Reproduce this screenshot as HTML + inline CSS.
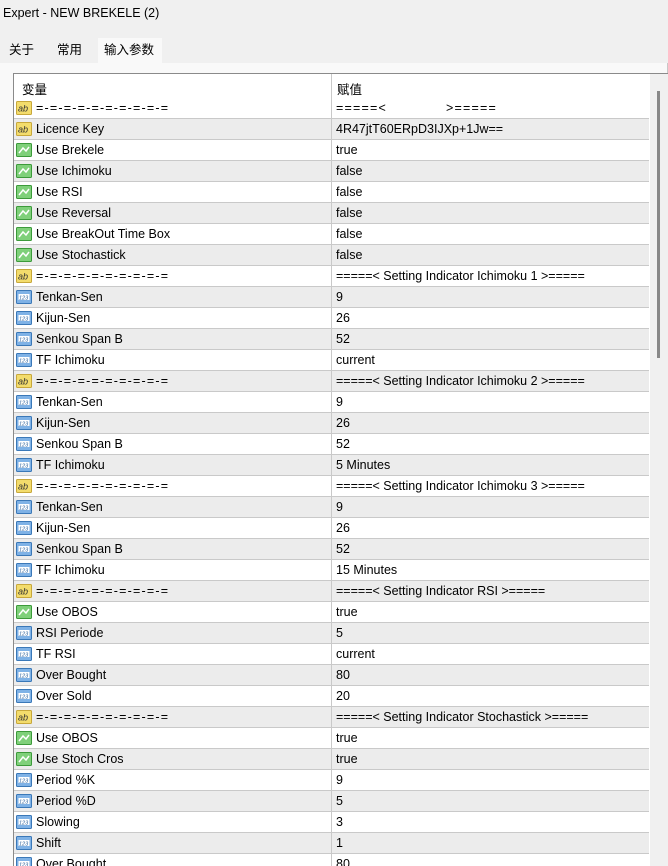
<!DOCTYPE html>
<html><head><meta charset="utf-8"><style>
*{margin:0;padding:0;box-sizing:border-box}
body{width:668px;height:866px;overflow:hidden;background:#f0f0f0;font-family:"Liberation Sans","Noto Sans CJK SC",sans-serif;font-size:12.5px;color:#000;position:relative}
.title{position:absolute;left:3px;top:6px;font-size:12.5px}
.tabs{position:absolute;top:38px;left:0;height:25px}
.tab{position:absolute;top:0;height:25px;line-height:25px;font-size:12.5px;white-space:nowrap}
.panel{position:absolute;left:0;top:63px;width:668px;height:803px;background:#f9f9f9;border-right:1px solid #c8c8c8}
.grid{position:absolute;left:13px;top:73px;width:655px;height:793px;border-left:1px solid #8a8a8a;border-top:1px solid #8a8a8a;background:#fff;overflow:hidden}
.hdr{position:absolute;left:0;top:0;width:636px;height:24px;background:#fff}
.hdr span{position:absolute;top:5px}
.row{position:absolute;left:0;width:635px;height:21px;border-bottom:1px solid #c9c9c9}
.row.g{background:#ececec}
.row .n{position:absolute;left:22px;top:3px;white-space:pre}
.row .v{position:absolute;left:322px;top:3px;white-space:pre}
.s{letter-spacing:1.2px}
.row i{position:absolute;left:2px;top:2px;width:16px;height:16px;display:block}
.vl{position:absolute;left:317px;top:0;width:1px;height:800px;background:#c9c9c9}
.sb{position:absolute;left:636px;top:0;width:19px;height:800px;background:#f0f0f0}
.th{position:absolute;left:7px;top:17px;width:3px;height:267px;background:#888}
</style></head><body>
<div class="title">Expert - NEW BREKELE (2)</div>
<div class="tabs">
<div class="tab" style="left:9px">关于</div>
<div class="tab" style="left:57px">常用</div>
<div class="tab" style="left:98px;width:64px;background:#f9f9f9;padding-left:6px">输入参数</div>
</div>
<div class="panel"></div>
<div class="grid">
<div class="hdr"><span style="left:8px">变量</span><span style="left:323px">赋值</span></div>
<svg width="0" height="0" style="position:absolute"><defs>
<symbol id="ab" viewBox="0 0 16 16"><rect x="0.5" y="1.5" width="15" height="13" rx="1" fill="#f3dc6c" stroke="#c8a83a"/><text x="2" y="11.5" font-size="9" font-family="Liberation Sans" fill="#333">ab</text></symbol>
<symbol id="bo" viewBox="0 0 16 16"><rect x="0.5" y="1.5" width="15" height="13" rx="1" fill="#7fd07a" stroke="#3c9a3a"/><path d="M3 11 L7 6 L10 9 L13 5" stroke="#fff" stroke-width="1.5" fill="none"/></symbol>
<symbol id="nu" viewBox="0 0 16 16"><rect x="0.5" y="1.5" width="15" height="13" rx="1" fill="#7fb2e6" stroke="#3a78b8"/><rect x="2.5" y="5" width="11" height="6" fill="#fff"/><text x="3" y="10.3" font-size="5.5" font-family="Liberation Sans" fill="#2a5f9a">123</text></symbol>
</defs></svg>
<div id="rows"></div>
<div class="vl"></div>
<div class="sb"><div class="th"></div></div>
</div>
<script>
var S='<span class="s">=-=-=-=-=-=-=-=-=-=</span>';
var d=[
["ab",S,'<span class="s">=====&lt;</span>                 <span class="s">&gt;=====</span>'],
["ab","Licence Key","4R47jtT60ERpD3IJXp+1Jw=="],
["bo","Use Brekele","true"],["bo","Use Ichimoku","false"],["bo","Use RSI","false"],["bo","Use Reversal","false"],["bo","Use BreakOut Time Box","false"],["bo","Use Stochastick","false"],
["ab",S,"=====&lt; Setting Indicator Ichimoku 1 &gt;====="],
["nu","Tenkan-Sen","9"],["nu","Kijun-Sen","26"],["nu","Senkou Span B","52"],["nu","TF Ichimoku","current"],
["ab",S,"=====&lt; Setting Indicator Ichimoku 2 &gt;====="],
["nu","Tenkan-Sen","9"],["nu","Kijun-Sen","26"],["nu","Senkou Span B","52"],["nu","TF Ichimoku","5 Minutes"],
["ab",S,"=====&lt; Setting Indicator Ichimoku 3 &gt;====="],
["nu","Tenkan-Sen","9"],["nu","Kijun-Sen","26"],["nu","Senkou Span B","52"],["nu","TF Ichimoku","15 Minutes"],
["ab",S,"=====&lt; Setting Indicator RSI &gt;====="],
["bo","Use OBOS","true"],["nu","RSI Periode","5"],["nu","TF RSI","current"],["nu","Over Bought","80"],["nu","Over Sold","20"],
["ab",S,"=====&lt; Setting Indicator Stochastick &gt;====="],
["bo","Use OBOS","true"],["bo","Use Stoch Cros","true"],["nu","Period %K","9"],["nu","Period %D","5"],["nu","Slowing","3"],["nu","Shift","1"],["nu","Over Bought","80"]];
var h="";
for(var i=0;i<d.length;i++){h+='<div class="row'+(i%2?' g':'')+'" style="top:'+(24+21*i)+'px"><i><svg width="16" height="16"><use href="#'+d[i][0]+'"/></svg></i><span class="n">'+d[i][1]+'</span><span class="v">'+d[i][2]+'</span></div>';}
document.getElementById("rows").innerHTML=h;
</script>
</body></html>
